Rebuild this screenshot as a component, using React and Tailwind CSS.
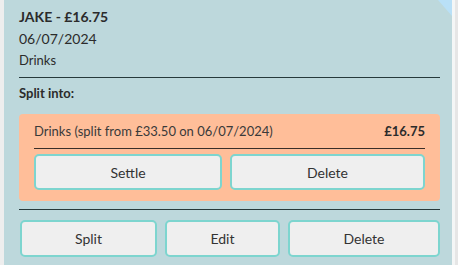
export default function App() {
  return (
    <div className="w-[458px] h-[265px] flex bg-[#ececec] overflow-hidden" style={{ fontFamily: "Lato, 'Open Sans', sans-serif" }}>
      <div className="w-[4px] bg-[#eeeeee]" />
      <div className="relative flex-1 bg-[#bdd8dc] pl-[15px] pr-[12px] pt-[8px] text-[#2b2b2b]">
        <div className="absolute top-0 right-0 w-[14px] h-[16px]">
          <svg width="14" height="16" viewBox="0 0 14 16">
            <polygon points="0,0 14,0 14,16" fill="#b9e0f7" />
          </svg>
        </div>
        <div className="text-[14px] leading-[18px] font-bold">JAKE - £16.75</div>
        <div className="text-[14px] leading-[18px] mt-[4px]">06/07/2024</div>
        <div className="text-[13px] leading-[18px] mt-[3px]">Drinks</div>
        <div className="h-px bg-[#26393b] mt-[8px]" />
        <div className="text-[13px] leading-[18px] font-bold mt-[6px]">Split into:</div>
        <div className="mt-[12px] bg-[#ffbe99] rounded-[4px] px-[15px] pt-[8px] pb-[10px] h-[87px]">
          <div className="flex justify-between text-[13px] leading-[18px]">
            <span className="text-[#3a3a3a]">Drinks (split from £33.50 on 06/07/2024)</span>
            <span className="font-bold">£16.75</span>
          </div>
          <div className="h-px bg-[#3a2e28] mt-[8px]" />
          <div className="flex gap-[8px] mt-[5px]">
            <button className="w-[188px] h-[36px] bg-[#efefef] border-2 border-[#7dd5cf] rounded-[5px] text-[14px] text-[#333]">Settle</button>
            <button className="flex-1 h-[36px] bg-[#efefef] border-2 border-[#7dd5cf] rounded-[5px] text-[14px] text-[#333]">Delete</button>
          </div>
        </div>
        <div className="h-px bg-[#26393b] mt-[8px]" />
        <div className="flex gap-[8px] mt-[10px] pl-px">
          <button className="w-[137px] h-[37px] bg-[#efefef] border-2 border-[#7dd5cf] rounded-[5px] text-[14px] text-[#333]">Split</button>
          <button className="w-[115px] h-[37px] bg-[#efefef] border-2 border-[#7dd5cf] rounded-[5px] text-[14px] text-[#333]">Edit</button>
          <button className="flex-1 h-[37px] bg-[#efefef] border-2 border-[#7dd5cf] rounded-[5px] text-[14px] text-[#333]">Delete</button>
        </div>
      </div>
      <div className="w-[3px] bg-[#f4f6f6]" />
      <div className="w-[3px] bg-[#e6e6e6]" />
    </div>
  );
}
